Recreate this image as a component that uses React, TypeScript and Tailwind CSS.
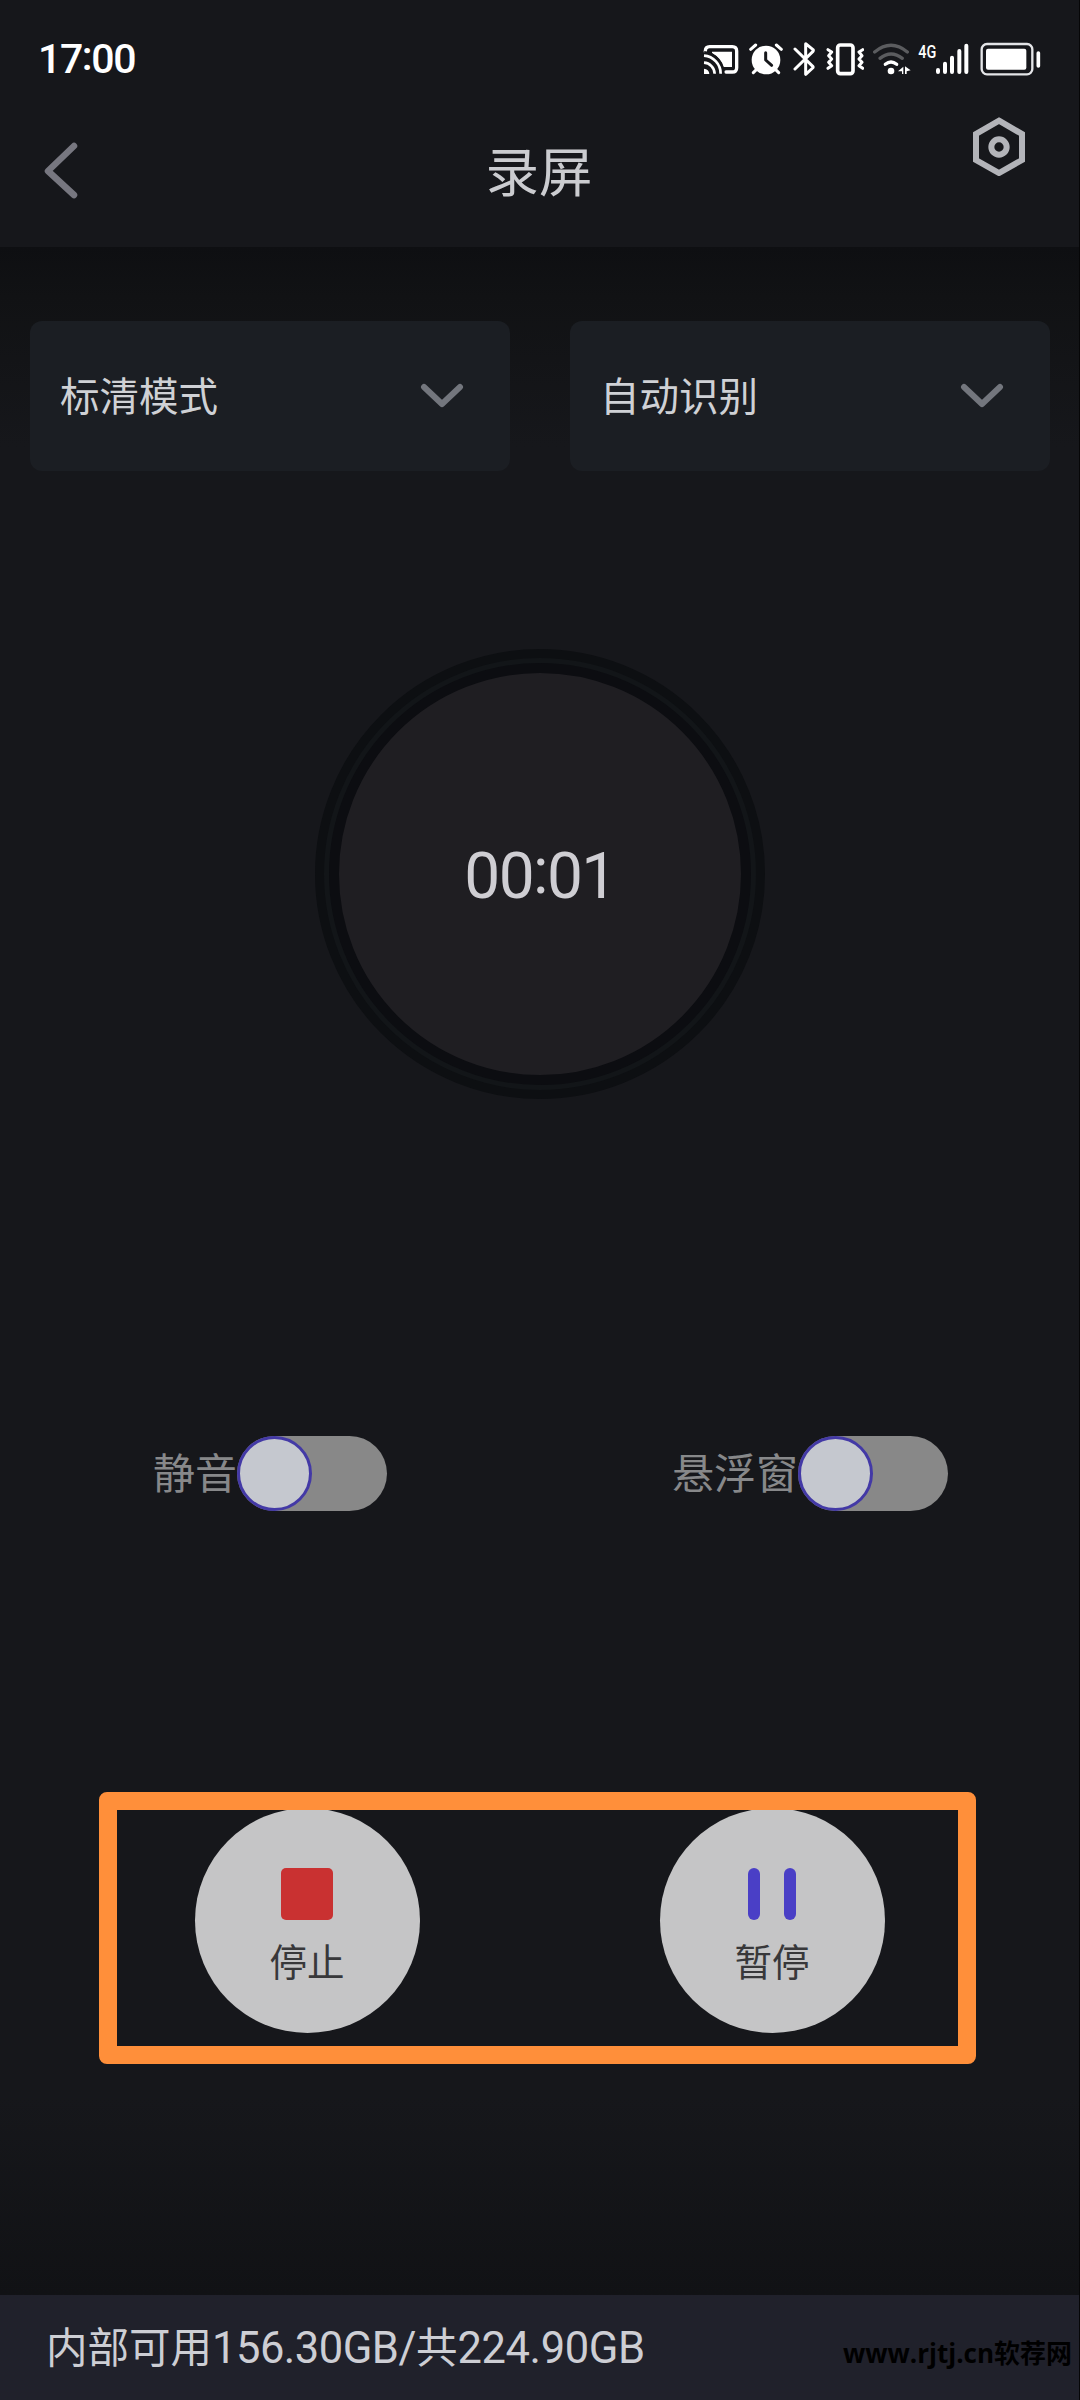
import type { ReactNode } from "react";
import clsx from "clsx";

type IconProps = {
  className: string;
};

function CastIcon({ className }: IconProps) {
  return (
    <svg viewBox="66 60 111 108" className={className} fill="none" aria-hidden="true">
      <path
        d="M76 92V90Q76 77 89 77H157Q170 77 170 90V140Q170 153 157 153H138"
        stroke="#fff"
        strokeWidth="10"
        strokeLinecap="round"
      />
      <path d="M96 92H156V138H131Q124 112 96 96Z" fill="#fff" />
      <path d="M72 98A60 60 0 0 1 125 158M72 116A42 42 0 0 1 107 158" stroke="#16171b" strokeWidth="16" />
      <path d="M72 104A54 54 0 0 1 122 158M72 125A34 34 0 0 1 104 158" stroke="#fff" strokeWidth="8" />
      <path d="M72 143A16 16 0 0 1 88 159H72Z" fill="#fff" />
    </svg>
  );
}

function AlarmIcon({ className }: IconProps) {
  return (
    <svg viewBox="207 60 102 108" className={className} fill="none" strokeLinecap="round" aria-hidden="true">
      <circle cx="258" cy="117" r="43" fill="#fff" />
      <path d="M212 85L227 72M304 85L289 72" stroke="#fff" strokeWidth="9" />
      <path d="M229 146L220 155M287 146L296 155" stroke="#fff" strokeWidth="9" />
      <path d="M257 95V117L275 133" stroke="#16171b" strokeWidth="9" strokeLinejoin="round" />
    </svg>
  );
}

function BluetoothIcon({ className }: IconProps) {
  return (
    <svg viewBox="339 60 66 108" className={className} fill="none" aria-hidden="true">
      <path
        d="M345 84L399 137Q400 139 398 141L377 160V68L399 86Q401 88 399 91L345 144"
        stroke="#fff"
        strokeWidth="9"
        strokeLinecap="round"
        strokeLinejoin="round"
      />
    </svg>
  );
}

function VibrateIcon({ className }: IconProps) {
  return (
    <svg viewBox="438 60 114 108" className={className} fill="none" stroke="#fff" strokeLinejoin="round" aria-hidden="true">
      <rect x="473" y="72" width="46" height="86" rx="8" strokeWidth="11" />
      <path
        d="M444 86L455 93L446 104L455 114L446 124L455 134L444 142M548 86L537 93L546 104L537 114L546 124L537 134L548 142"
        strokeWidth="9"
        strokeLinecap="round"
      />
    </svg>
  );
}

function WifiIcon({ className }: IconProps) {
  return (
    <svg viewBox="576 60 117 108" className={className} fill="none" strokeLinecap="round" aria-hidden="true">
      <path d="M584 93Q633 53 682 93" stroke="#5b5c5f" strokeWidth="10" />
      <path d="M600 112Q633 86 667 112" stroke="#5b5c5f" strokeWidth="10" />
      <path d="M616 130Q633 116 650 130" stroke="#fff" strokeWidth="10" />
      <circle cx="633" cy="150" r="10" fill="#fff" />
      <path d="M654 151L670 137V159H666V151ZM675 159V136L692 148L680 151V159Z" fill="#fff" />
    </svg>
  );
}

function SignalIcon({ className }: IconProps) {
  return (
    <svg viewBox="714 60 153 108" className={className} aria-hidden="true">
      <text
        x="715"
        y="110"
        fill="#fff"
        fontFamily="Roboto"
        fontSize="57"
        fontWeight="500"
        textLength="54"
        lengthAdjust="spacingAndGlyphs"
      >
        4G
      </text>
      <g stroke="#fff" strokeWidth="12" strokeLinecap="round">
        <path d="M774 147V153M795 128V153M816 110V153M838 90V153M859 74V153" />
      </g>
    </svg>
  );
}

function BatteryIcon({ className }: IconProps) {
  return (
    <svg viewBox="900 60 183 108" className={className} fill="none" aria-hidden="true">
      <rect x="905" y="69" width="152" height="91" rx="16" stroke="#e4e5e8" strokeWidth="7" />
      <rect x="918" y="83" width="121" height="63" rx="6" fill="#fff" />
      <path d="M1075 96V135" stroke="#fff" strokeWidth="11" strokeLinecap="round" />
    </svg>
  );
}

function StatusBar() {
  return (
    <div className="flex h-[97px] shrink-0 items-center pl-[38px] pr-[38px] pt-5">
      <span className="pt-px text-[41px] font-medium leading-none tracking-[-1.4px] text-white">
        17
        <span className="relative -top-[3px]">:</span>
        00
      </span>
      <div className="ml-auto flex items-center">
        <CastIcon className="h-9 w-[37px]" />
        <AlarmIcon className="ml-[10px] h-9 w-[34px]" />
        <BluetoothIcon className="ml-[10px] h-9 w-[22px]" />
        <VibrateIcon className="ml-[11px] h-9 w-[38px]" />
        <WifiIcon className="ml-2 h-9 w-[39px]" />
        <SignalIcon className="ml-[7px] h-9 w-[51px]" />
        <BatteryIcon className="ml-[11px] h-9 w-[61px]" />
      </div>
    </div>
  );
}

function TitleBar() {
  return (
    <header className="grid h-[150px] shrink-0 grid-cols-3 items-center pl-[43px] pr-[53px]">
      <button type="button" aria-label="返回" className="justify-self-start">
        <svg viewBox="0 0 36 60" className="h-[60px] w-9" fill="none" aria-hidden="true">
          <path
            d="M31 4L5 29L31 53"
            stroke="#777780"
            strokeWidth="6.5"
            strokeLinecap="round"
            strokeLinejoin="round"
          />
        </svg>
      </button>
      <h1 className="pl-[9px] pt-1 text-center text-[53.5px] leading-none text-[#cbccd0]">录屏</h1>
      <button type="button" aria-label="设置" className="mt-[19px] self-start justify-self-end">
        <svg viewBox="876 288 162 180" className="h-[60px] w-[54px]" fill="none" stroke="#b3b4b9" aria-hidden="true">
          <path d="M957 302L1026 342V420L957 459L888 420V342Z" strokeWidth="18" />
          <circle cx="957" cy="381" r="23" strokeWidth="18" />
        </svg>
      </button>
    </header>
  );
}

function SelectBox({ label }: { label: string }) {
  return (
    <button
      type="button"
      className="flex h-[150px] items-center justify-between rounded-xl bg-[#1b1e23] pl-[30px] pr-[46px]"
    >
      <span className="pt-[3px] text-[39.5px] leading-none text-[#cfd1d5]">{label}</span>
      <svg viewBox="0 0 44 28" className="h-7 w-11" fill="none" aria-hidden="true">
        <path
          d="M4 5L22 22L40 5"
          stroke="#73767d"
          strokeWidth="6"
          strokeLinecap="round"
          strokeLinejoin="round"
        />
      </svg>
    </button>
  );
}

function TimerDial() {
  return (
    <div className="flex size-[450px] items-center justify-center rounded-full border-[9px] border-[#0d0f12] bg-[#121518] p-[5px]">
      <div className="flex size-full items-center justify-center rounded-full border-[10px] border-[#0c0d11] bg-[#1f1e22]">
        <span className="pt-[5px] text-[64px] leading-none tracking-[-1.6px] text-[#cfced3]">
          00
          <span className="relative -top-[5px]">:</span>
          01
        </span>
      </div>
    </div>
  );
}

function ToggleRow({ label, checked = false }: { label: string; checked?: boolean }) {
  return (
    <div className="flex items-center">
      <span className="pt-[3px] text-[42px] leading-none text-[#87888a]">{label}</span>
      <button
        type="button"
        role="switch"
        aria-checked={checked}
        aria-label={label}
        className={clsx("flex h-[75px] w-[150px] rounded-full bg-[#888888]", checked && "justify-end")}
      >
        <span className="size-[75px] rounded-full border-[3px] border-[#4339a6] bg-[#c5c8cf]" />
      </button>
    </div>
  );
}

function RoundButton({ label, children }: { label: string; children: ReactNode }) {
  return (
    <button type="button" className="flex size-[225px] flex-col items-center rounded-full bg-[#c5c5c6] pt-[60px]">
      {children}
      <span className="mt-[25px] text-[37.5px] leading-none text-[#38383a]">{label}</span>
    </button>
  );
}

export default function App() {
  return (
    <div className="relative flex h-[2400px] w-[1080px] flex-col overflow-hidden border-r border-[#060607] bg-[#16171b] font-[Roboto,'Noto_Sans_CJK_SC',sans-serif]">
      <StatusBar />
      <TitleBar />

      <main className="flex flex-1 flex-col items-center bg-[linear-gradient(to_bottom,#0e0f12_0px,#111214_50px,#16171b_200px,#16171b_1850px,#111215_2048px)]">
        <div className="mt-[74px] grid w-full grid-cols-2 gap-[60px] pl-[30px] pr-[29px]">
          <SelectBox label="标清模式" />
          <SelectBox label="自动识别" />
        </div>

        <div className="mt-[178px] pl-px">
          <TimerDial />
        </div>

        <div className="mt-[337px] flex w-full justify-between pl-[153px] pr-[131px]">
          <ToggleRow label="静音" />
          <ToggleRow label="悬浮窗" />
        </div>

        <div className="mt-[297px] flex gap-60">
          <RoundButton label="停止">
            <span className="size-[52px] rounded-[5px] bg-[#c93131]" />
          </RoundButton>
          <RoundButton label="暂停">
            <span className="flex h-[52px] gap-6">
              <span className="w-3 rounded-full bg-[#4a3fc6]" />
              <span className="w-3 rounded-full bg-[#4a3fc6]" />
            </span>
          </RoundButton>
        </div>
      </main>

      <footer className="flex h-[105px] shrink-0 items-center justify-between bg-[#20212b] pl-[46px] pr-[7px]">
        <span className="pt-[3px] text-[41.5px] leading-none text-[#cdced4]">
          内部可用<span className="text-[43.5px] tracking-[-0.5px]">156.30GB/</span>
          共<span className="text-[43.5px] tracking-[-0.4px]">224.90GB</span>
        </span>
        <span className="mt-[11px] font-['Open_Sans','Noto_Sans_CJK_SC',sans-serif] text-[26px] font-bold leading-none text-black">
          www.rjtj.cn软荐网
        </span>
      </footer>

      {/* highlight around the stop / pause controls */}
      <div className="pointer-events-none absolute left-[99px] top-[1792px] h-[272px] w-[877px] rounded-lg border-[18px] border-[#ff8f3a]" />
    </div>
  );
}
